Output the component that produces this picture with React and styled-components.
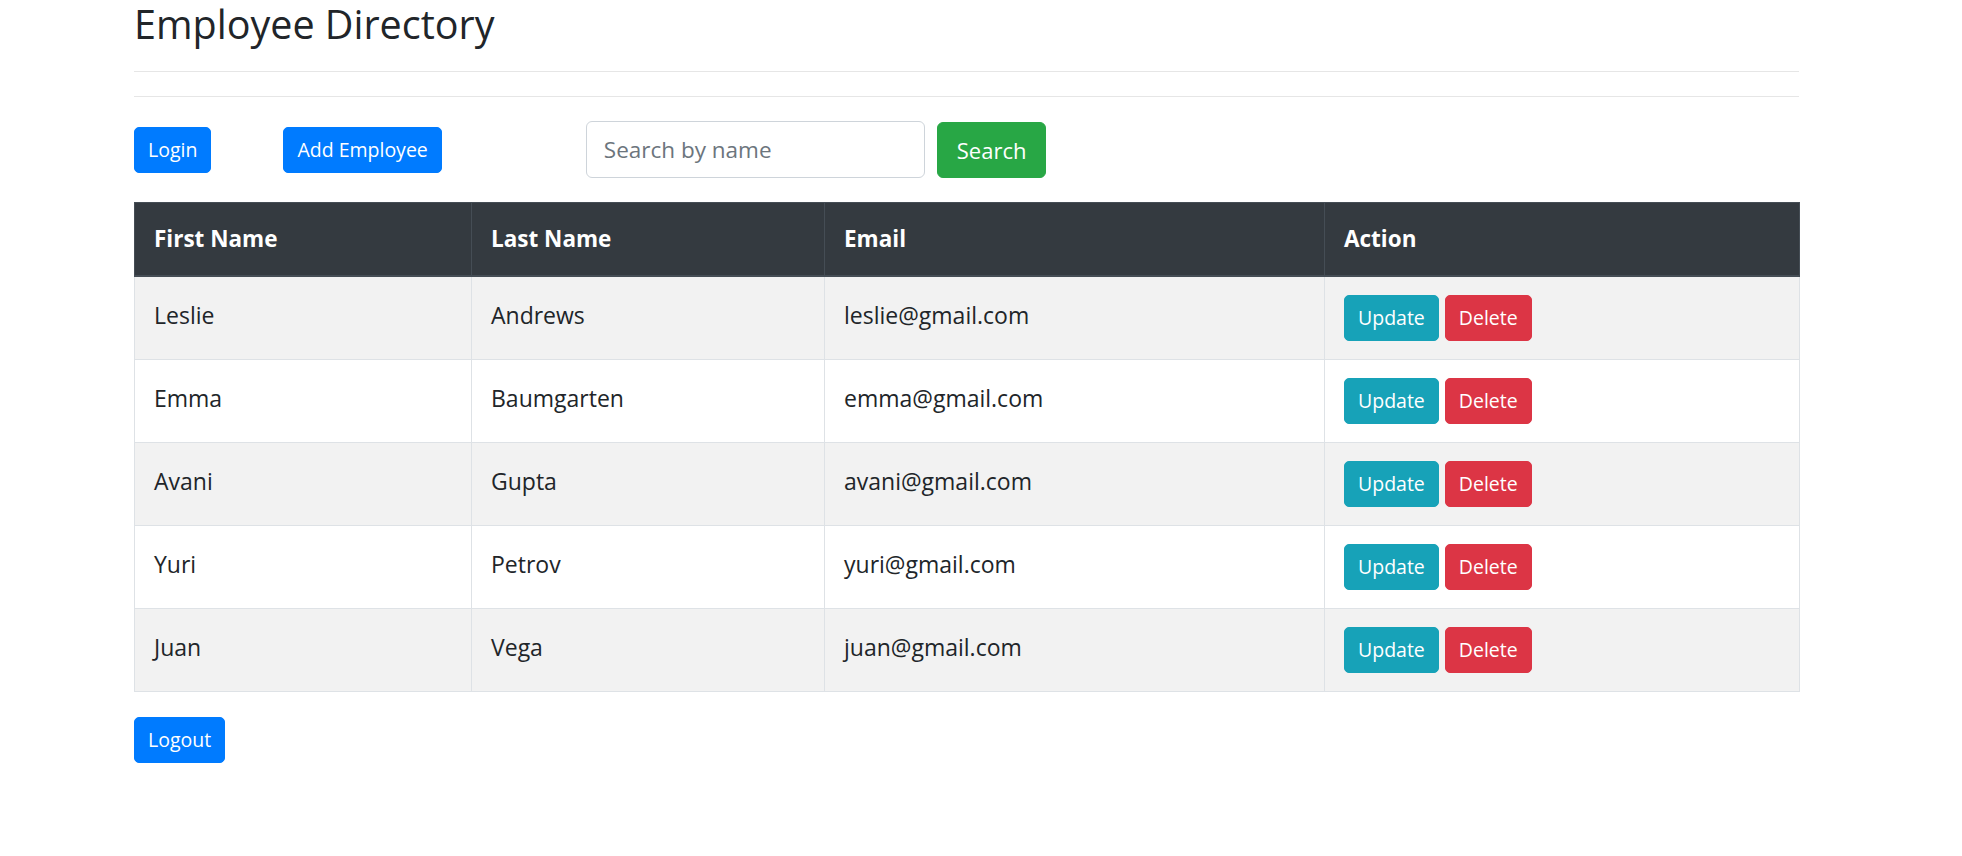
import styled, { createGlobalStyle } from "styled-components";

const GlobalStyle = createGlobalStyle`
    html, body {
        margin: 0;
        padding: 0;
        background: #fff;
    }
    body {
        font-family: "Open Sans", "Liberation Sans", sans-serif;
        color: #212529;
    }
    * { box-sizing: border-box; }
`;

const Page = styled.div`
    width: 1665px;
    margin-left: 134px;
`;

const Title = styled.h1`
    margin: 0;
    font-size: 39.5px;
    font-weight: 400;
    line-height: 48px;
    color: #212529;
`;

const Rule = styled.hr`
    margin: 23px 0 24px;
    border: 0;
    border-top: 1px solid #e6e6e6;
`;

const Toolbar = styled.div`
    display: flex;
    align-items: center;
    margin-top: 24px;
    height: 57px;
`;

const colors = {
    primary: "#007bff",
    success: "#28a745",
    info: "#17a2b8",
    danger: "#dc3545",
};

const Btn = styled.button`
    display: inline-block;
    font-family: inherit;
    font-size: 19.5px;
    line-height: 30px;
    padding: 7px 13px;
    border: 1px solid ${({$variant}) => colors[$variant] || colors.primary};
    border-radius: 5px;
    color: #fff;
    cursor: pointer;
    background: ${({$variant}) => colors[$variant] || colors.primary};
    margin-left: ${({$offset}) => $offset || 0}px;
`;

const BigBtn = styled(Btn)`
    font-size: 22px;
    line-height: 34px;
    padding: 10px 19px;
    border-radius: 6px;
`;

const SearchForm = styled.form`
    display: flex;
    align-items: center;
    gap: 12px;
    margin-left: 144px;
`;

const SearchInput = styled.input`
    width: 339px;
    height: 57px;
    padding: 0 17px;
    font-family: inherit;
    font-size: 22.5px;
    color: #495057;
    border: 1px solid #ced4da;
    border-radius: 6px;
    outline: none;
    &::placeholder {
        color: #6c757d;
    }
`;

const Table = styled.table`
    width: 1665px;
    margin-top: 24px;
    border-collapse: collapse;
    table-layout: fixed;
`;

const HeadCell = styled.th`
    width: ${({$w}) => $w}px;
    text-align: left;
    font-size: 22.5px;
    font-weight: 700;
    line-height: 34px;
    padding: 19px;
    color: #fff;
    background: #343a40;
    border: 1px solid #454d55;
    border-bottom-width: 2px;
`;

const Row = styled.tr`
    background: ${({$striped}) => ($striped ? "#f2f2f2" : "#fff")};
`;

const Cell = styled.td`
    height: 83px;
    font-size: 23px;
    line-height: 31px;
    padding: ${({$action}) => ($action ? "18px 19px" : "15px 19px 21px")};
    vertical-align: middle;
    border: 1px solid #dee2e6;
    color: #212529;
`;

const Actions = styled.div`
    display: flex;
    gap: 6px;
`;

const Footer = styled.div`
    margin-top: 25px;
`;

const employees = [
    { first: "Leslie", last: "Andrews", email: "leslie@gmail.com" },
    { first: "Emma", last: "Baumgarten", email: "emma@gmail.com" },
    { first: "Avani", last: "Gupta", email: "avani@gmail.com" },
    { first: "Yuri", last: "Petrov", email: "yuri@gmail.com" },
    { first: "Juan", last: "Vega", email: "juan@gmail.com" },
];

const App = () => {
    return (
        <>
            <GlobalStyle />
            <Page>
                <Title>Employee Directory</Title>
                <Rule />
                <Rule />
                <Toolbar>
                    <Btn $variant="primary" type="button">Login</Btn>
                    <Btn $variant="primary" $offset={72} type="button">Add Employee</Btn>
                    <SearchForm onSubmit={e => e.preventDefault()}>
                        <SearchInput type="text" placeholder="Search by name" />
                        <BigBtn $variant="success" type="submit">Search</BigBtn>
                    </SearchForm>
                </Toolbar>
                <Table>
                    <thead>
                        <tr>
                            <HeadCell $w={337}>First Name</HeadCell>
                            <HeadCell $w={353}>Last Name</HeadCell>
                            <HeadCell $w={500}>Email</HeadCell>
                            <HeadCell $w={475}>Action</HeadCell>
                        </tr>
                    </thead>
                    <tbody>
                        {employees.map((emp, i) => (
                            <Row key={emp.email} $striped={i % 2 === 0}>
                                <Cell>{emp.first}</Cell>
                                <Cell>{emp.last}</Cell>
                                <Cell>{emp.email}</Cell>
                                <Cell $action>
                                    <Actions>
                                        <Btn $variant="info" type="button">Update</Btn>
                                        <Btn $variant="danger" type="button">Delete</Btn>
                                    </Actions>
                                </Cell>
                            </Row>
                        ))}
                    </tbody>
                </Table>
                <Footer>
                    <Btn $variant="primary" type="button">Logout</Btn>
                </Footer>
            </Page>
        </>
    );
};

export default App;
